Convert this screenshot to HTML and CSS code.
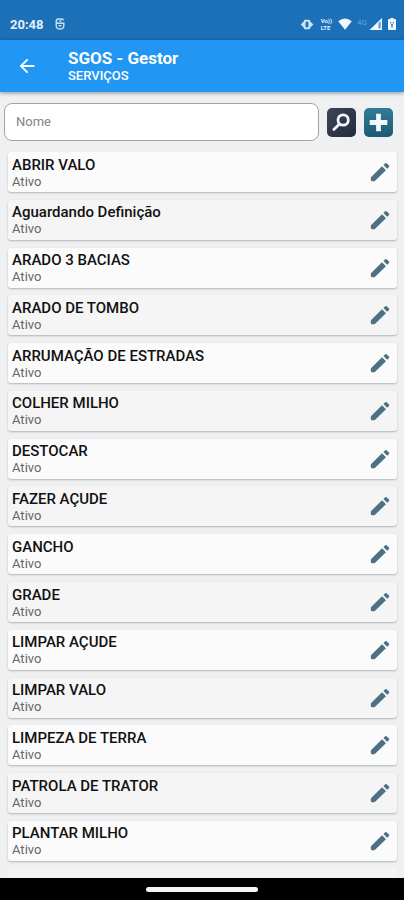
FILE: index.html
```
<!DOCTYPE html>
<html lang="pt-BR">
<head>
    <meta charset="UTF-8">
    <meta name="viewport" content="width=device-width, initial-scale=1.0">
    <title>SGOS - Gestor</title>
    <link rel="stylesheet" href="styles.css">
</head>
<body>
    <svg class="sprite" aria-hidden="true">
        <symbol id="pencil" viewBox="0 0 24 24">
            <path d="M2.4 17.4 L14.2 5.7 L18.5 10 L6.7 21.6 Q6.2 22 5.5 22 L3.2 22 Q2 22 2 20.8 L2 18.5 Q2 17.8 2.4 17.4 Z"/>
            <path d="M15.7 4.4 L17.4 2.7 Q18.5 1.8 19.6 2.7 L21.5 4.6 Q22.5 5.7 21.5 6.8 L19.9 8.5 Z"/>
        </symbol>
    </svg>

    <div class="screen">
        <div class="status-bar">
            <span class="clock">20:48</span>
            <svg class="status-app" viewBox="0 0 10 12">
                <path d="M8.6 2.4 Q8.2 1 6.6 1 H3.4 Q1.2 1 1.2 3.2 Q1.2 5.3 3.4 5.3 H8.8 V8 Q8.8 11 5 11 Q1.2 11 1.2 8 V3 M3.5 7.8 H6.5 M4 3.1 H6.5"/>
            </svg>
            <div class="status-icons">
                <svg class="icon-vibrate" viewBox="0 0 14 12">
                    <path d="M0 6 L4 2.2 V9.8 Z M14 6 L10 2.2 V9.8 Z"/>
                    <path fill-rule="evenodd" d="M5 0.8 H9 Q10.5 0.8 10.5 2.3 V9.7 Q10.5 11.2 9 11.2 H5 Q3.5 11.2 3.5 9.7 V2.3 Q3.5 0.8 5 0.8 Z M5.5 3 V9 H8.5 V3 Z"/>
                </svg>
                <div class="volte">
                    <span>Vo))</span>
                    <span>LTE</span>
                </div>
                <svg class="icon-wifi" viewBox="0 0 14 12">
                    <path d="M0.2 3.2 Q7 -2.4 13.8 3.2 L7 11.8 Z"/>
                </svg>
                <span class="network">4G</span>
                <svg class="icon-signal" viewBox="0 0 14 12">
                    <path d="M13 0 V12 H0.5 Z"/>
                    <path class="signal-gap" d="M9.5 5 L11.7 3 V10.6 H9.5 Z"/>
                </svg>
                <svg class="icon-battery" viewBox="0 0 8 12">
                    <path fill-rule="evenodd" d="M2.5 0 H5.5 V1 H7 Q8 1 8 2 V11 Q8 12 7 12 H1 Q0 12 0 11 V2 Q0 1 1 1 H2.5 Z M2 4 L3.4 7 V9.5 H4.6 V7 L6 4 H4.8 V6 H3.2 V4 Z"/>
                </svg>
            </div>
        </div>

        <header class="app-bar">
            <button class="back" type="button" aria-label="Voltar">
                <svg viewBox="0 0 24 24"><path d="M20 11H7.83l5.59-5.59L12 4l-8 8 8 8 1.41-1.41L7.83 13H20v-2z"/></svg>
            </button>
            <div class="heading">
                <h1>SGOS - Gestor</h1>
                <p>SERVIÇOS</p>
            </div>
        </header>

        <main class="content">
            <form class="search">
                <input class="search-input" type="text" placeholder="Nome" aria-label="Nome">
                <button class="tool tool-search" type="button" aria-label="Pesquisar">
                    <svg viewBox="0 0 28 28">
                        <circle cx="15.6" cy="11.6" r="5"/>
                        <path d="M11.8 15.6 L6.6 20.8"/>
                    </svg>
                </button>
                <button class="tool tool-add" type="button" aria-label="Adicionar">
                    <svg viewBox="0 0 28 28"><path d="M14 5.5 V22.5 M5.5 14 H22.5"/></svg>
                </button>
            </form>

            <ul class="services">
                <li class="service">
                    <div><h2>ABRIR VALO</h2><p>Ativo</p></div>
                    <button class="edit" type="button" aria-label="Editar ABRIR VALO"><svg><use href="#pencil"/></svg></button>
                </li>
                <li class="service">
                    <div><h2>Aguardando Definição</h2><p>Ativo</p></div>
                    <button class="edit" type="button" aria-label="Editar Aguardando Definição"><svg><use href="#pencil"/></svg></button>
                </li>
                <li class="service">
                    <div><h2>ARADO 3 BACIAS</h2><p>Ativo</p></div>
                    <button class="edit" type="button" aria-label="Editar ARADO 3 BACIAS"><svg><use href="#pencil"/></svg></button>
                </li>
                <li class="service">
                    <div><h2>ARADO DE TOMBO</h2><p>Ativo</p></div>
                    <button class="edit" type="button" aria-label="Editar ARADO DE TOMBO"><svg><use href="#pencil"/></svg></button>
                </li>
                <li class="service">
                    <div><h2>ARRUMAÇÃO DE ESTRADAS</h2><p>Ativo</p></div>
                    <button class="edit" type="button" aria-label="Editar ARRUMAÇÃO DE ESTRADAS"><svg><use href="#pencil"/></svg></button>
                </li>
                <li class="service">
                    <div><h2>COLHER MILHO</h2><p>Ativo</p></div>
                    <button class="edit" type="button" aria-label="Editar COLHER MILHO"><svg><use href="#pencil"/></svg></button>
                </li>
                <li class="service">
                    <div><h2>DESTOCAR</h2><p>Ativo</p></div>
                    <button class="edit" type="button" aria-label="Editar DESTOCAR"><svg><use href="#pencil"/></svg></button>
                </li>
                <li class="service">
                    <div><h2>FAZER AÇUDE</h2><p>Ativo</p></div>
                    <button class="edit" type="button" aria-label="Editar FAZER AÇUDE"><svg><use href="#pencil"/></svg></button>
                </li>
                <li class="service">
                    <div><h2>GANCHO</h2><p>Ativo</p></div>
                    <button class="edit" type="button" aria-label="Editar GANCHO"><svg><use href="#pencil"/></svg></button>
                </li>
                <li class="service">
                    <div><h2>GRADE</h2><p>Ativo</p></div>
                    <button class="edit" type="button" aria-label="Editar GRADE"><svg><use href="#pencil"/></svg></button>
                </li>
                <li class="service">
                    <div><h2>LIMPAR AÇUDE</h2><p>Ativo</p></div>
                    <button class="edit" type="button" aria-label="Editar LIMPAR AÇUDE"><svg><use href="#pencil"/></svg></button>
                </li>
                <li class="service">
                    <div><h2>LIMPAR VALO</h2><p>Ativo</p></div>
                    <button class="edit" type="button" aria-label="Editar LIMPAR VALO"><svg><use href="#pencil"/></svg></button>
                </li>
                <li class="service">
                    <div><h2>LIMPEZA DE TERRA</h2><p>Ativo</p></div>
                    <button class="edit" type="button" aria-label="Editar LIMPEZA DE TERRA"><svg><use href="#pencil"/></svg></button>
                </li>
                <li class="service">
                    <div><h2>PATROLA DE TRATOR</h2><p>Ativo</p></div>
                    <button class="edit" type="button" aria-label="Editar PATROLA DE TRATOR"><svg><use href="#pencil"/></svg></button>
                </li>
                <li class="service">
                    <div><h2>PLANTAR MILHO</h2><p>Ativo</p></div>
                    <button class="edit" type="button" aria-label="Editar PLANTAR MILHO"><svg><use href="#pencil"/></svg></button>
                </li>
            </ul>
            <div class="next-row"></div>
        </main>

        <div class="nav-bar"><span class="handle"></span></div>
    </div>
</body>
</html>
```

FILE: styles.css
```
:root {
    --status-blue: #1b70b7;
    --app-blue: #2196f3;
    --page: #eef0f2;
    --steel: #4e7084;
}

* {
    margin: 0;
    padding: 0;
    box-sizing: border-box;
}

body {
    font-family: Roboto, "Liberation Sans", sans-serif;
    background: var(--page);
    color: #111;
}

button {
    border: none;
    background: none;
    cursor: pointer;
}

svg {
    display: block;
}

.sprite {
    display: none;
}

.screen {
    display: flex;
    flex-direction: column;
    min-height: 100vh;
}

/* Status bar */
.status-bar {
    display: flex;
    align-items: center;
    height: 40px;
    padding: 8px 8px 0 10px;
    background: var(--status-blue);
    color: #e6f0fa;
}

.clock {
    font-size: 13px;
    font-weight: 700;
}

.status-app {
    width: 10px;
    height: 12px;
    margin-left: 11px;
    fill: none;
    stroke: #c9dff2;
    stroke-width: 1.4;
}

.status-icons {
    display: flex;
    align-items: center;
    margin-left: auto;
    fill: #f2f8ff;
}

.icon-vibrate {
    width: 14px;
    height: 11px;
    fill: #cfe2f4;
}

.volte {
    display: flex;
    flex-direction: column;
    margin-left: 7px;
    font-size: 6px;
    line-height: 7px;
    font-weight: 700;
}

.icon-wifi {
    width: 14px;
    height: 12px;
    margin-left: 6px;
}

.network {
    margin: -4px 0 0 5px;
    font-size: 8px;
    color: #6aa3d6;
}

.icon-signal {
    width: 14px;
    height: 12px;
    margin-left: 2px;
}

.signal-gap {
    fill: #5f9bd0;
}

.icon-battery {
    width: 8px;
    height: 12px;
    margin-left: 5px;
}

/* App bar */
.app-bar {
    display: flex;
    align-items: center;
    height: 52px;
    padding-left: 16px;
    background: var(--app-blue);
    color: white;
    box-shadow: 0 1px 4px rgba(0, 0, 0, 0.4);
}

.back svg {
    width: 22px;
    height: 22px;
    fill: white;
}

.heading {
    margin-left: 30px;
}

.heading h1 {
    font-size: 17px;
    line-height: 19px;
    font-weight: 700;
}

.heading p {
    font-size: 13px;
    line-height: 15px;
    font-weight: 500;
}

/* Search */
.content {
    flex: 1;
    display: flex;
    flex-direction: column;
}

.search {
    display: flex;
    align-items: center;
    padding: 11px 11px 11px 4px;
}

.search-input {
    flex: 1;
    min-width: 0;
    height: 38px;
    margin-right: 8px;
    padding: 0 11px 2px 11px;
    border: 1px solid #a2a5a8;
    border-radius: 8px;
    background: white;
    font-family: inherit;
    font-size: 13px;
}

.search-input::placeholder {
    color: #858585;
}

.tool {
    width: 29px;
    height: 29px;
    border-radius: 5px;
}

.tool svg {
    width: 29px;
    height: 29px;
    fill: none;
    stroke: #f4f8fa;
}

.tool-search {
    background: linear-gradient(135deg, #3d4558, #232b3c);
}

.tool-search svg {
    stroke-width: 2.7;
    stroke-linecap: round;
}

.tool-add {
    margin-left: 8px;
    background: linear-gradient(180deg, #2f7c98, #1d5a74);
}

.tool-add svg {
    stroke-width: 4.6;
}

/* Services */
.services {
    flex: 1;
    display: flex;
    flex-direction: column;
    justify-content: space-between;
    padding: 0 7px 0 8px;
    list-style: none;
}

.service {
    display: flex;
    align-items: center;
    justify-content: space-between;
    height: 40px;
    padding: 0 6px 0 4px;
    border-radius: 3px;
    background: #fbfbfb;
    box-shadow: 0 1px 2px rgba(0, 0, 0, 0.25);
}

.service:nth-child(even) {
    background: #f5f5f5;
}

.service h2 {
    font-size: 15px;
    line-height: 18px;
    font-weight: 500;
}

.service p {
    font-size: 13px;
    line-height: 15px;
    color: #666;
}

.edit svg {
    width: 22px;
    height: 22px;
    fill: var(--steel);
}

/* Top edge of the row scrolled below the fold */
.next-row {
    height: 9px;
    margin: 8px 7px 0 8px;
    border-radius: 3px 3px 0 0;
    background: #f3f4f5;
}

/* Gesture bar */
.nav-bar {
    display: flex;
    align-items: center;
    justify-content: center;
    height: 22px;
    background: black;
}

.handle {
    width: 112px;
    height: 5px;
    border-radius: 3px;
    background: #f5f5f5;
}
```
